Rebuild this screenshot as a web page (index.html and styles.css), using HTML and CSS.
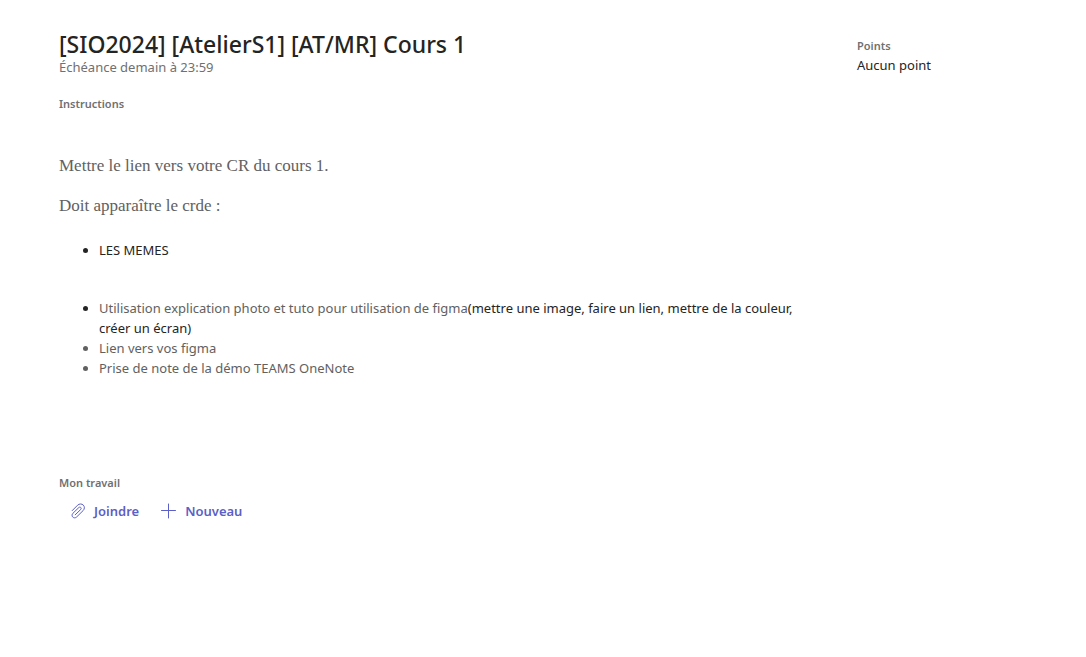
FILE: index.html
```html
<!DOCTYPE html>
<html lang="fr">
<head>
<meta charset="utf-8">
<meta name="viewport" content="width=device-width, initial-scale=1">
<title>[SIO2024] [AtelierS1] [AT/MR] Cours 1</title>
<link rel="stylesheet" href="styles.css">
</head>
<body>
<div class="assignment">
  <main class="details">
    <header>
      <h1 class="title">[SIO2024] [AtelierS1] [AT/MR] Cours 1</h1>
      <p class="due">Échéance demain à 23:59</p>
    </header>
    <section class="instructions">
      <h2 class="label">Instructions</h2>
      <div class="prose">
        <p>Mettre le lien vers votre CR du cours 1.</p>
        <p>Doit apparaître le crde :</p>
      </div>
      <ul class="list">
        <li>LES MEMES</li>
      </ul>
      <ul class="list">
        <li><span class="muted">Utilisation explication photo et tuto pour utilisation de figma</span>(mettre une image, faire un lien, mettre de la couleur, créer un écran)</li>
        <li class="muted">Lien vers vos figma</li>
        <li class="muted">Prise de note de la démo TEAMS OneNote</li>
      </ul>
    </section>
    <section class="work">
      <h2 class="label">Mon travail</h2>
      <div class="actions">
        <button type="button" class="action">
          <svg class="icon" viewBox="0 0 16 16" aria-hidden="true"><path d="M2.200 7.600 7.600 2.200C9.300.6 11.800.6 13.300 2.100s1.400 3.900-.2 5.500L6.600 14c-1.100 1.100-2.800 1.100-3.800.1s-1-2.700.1-3.800L8.900 4.500c.5-.5 1.400-.5 1.900 0s.5 1.300 0 1.900L5.200 11.800"/></svg>
          Joindre
        </button>
        <button type="button" class="action">
          <svg class="icon" viewBox="0 0 16 16" aria-hidden="true"><path d="M7.500 1v14M.5 7.500h14"/></svg>
          Nouveau
        </button>
      </div>
    </section>
  </main>
  <aside class="points">
    <h2 class="label">Points</h2>
    <p class="points-value">Aucun point</p>
  </aside>
</div>
</body>
</html>
```
FILE: styles.css
```css
* {
  box-sizing: border-box;
}

body {
  margin: 0;
  background: #fff;
  color: #242424;
  font: 13px/20px "Segoe UI", "Noto Sans", "Open Sans", sans-serif;
}

h1, h2, p, ul {
  margin: 0;
}

.assignment {
  display: flex;
  gap: 40px;
  padding: 28px 59px 40px;
}

.details {
  flex: 1;
  min-width: 0;
}

.title {
  font-size: 23px;
  line-height: 32px;
  font-weight: 500;
}

.due {
  line-height: 14px;
  color: #707070;
}

.label {
  font-size: 11px;
  line-height: 16px;
  font-weight: 600;
  color: #707070;
}

.instructions {
  margin-top: 22px;
}

.prose {
  margin-top: 44px;
  font: 17px/20px "Times New Roman", "Liberation Serif", serif;
  color: #616161;
}

.prose p + p {
  margin-top: 20px;
}

.list {
  padding-left: 40px;
}

.prose + .list {
  margin-top: 24px;
}

.list + .list {
  margin-top: 38px;
}

.muted {
  color: #616161;
}

.work {
  margin-top: 97px;
}

.actions {
  display: flex;
  gap: 22px;
  margin-top: 10px;
  padding-left: 11px;
}

.action {
  display: flex;
  align-items: center;
  gap: 8px;
  padding: 0;
  border: 0;
  background: none;
  color: #5b5fc7;
  font: inherit;
  font-weight: 600;
  cursor: pointer;
}

.icon {
  width: 16px;
  height: 16px;
  fill: none;
  stroke: currentColor;
  stroke-width: 1;
  stroke-linecap: round;
}

.points {
  flex: 0 0 170px;
  padding-top: 10px;
}

.points-value {
  margin-top: 1px;
}
```
